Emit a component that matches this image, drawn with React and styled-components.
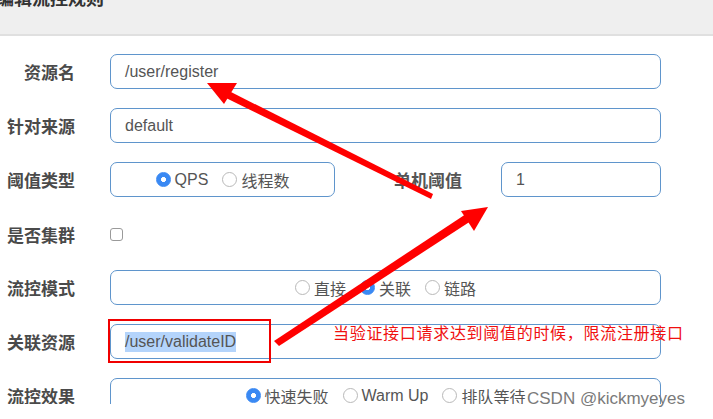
import React from "react";
import styled, { createGlobalStyle } from "styled-components";

const GlobalStyle = createGlobalStyle`
  html, body {
    margin: 0;
    padding: 0;
    background: #fff;
  }
  body {
    font-family: "Liberation Sans", "Noto Sans CJK SC", sans-serif;
  }
`;

const rows = [
  { label: "资源名", value: "/user/register" },
  { label: "针对来源", value: "default" },
];

function Radio({ checked, children }) {
  return (
    <RadioItem>
      <RadioDot checked={checked} />
      {children}
    </RadioItem>
  );
}

function App() {
  return (
    <>
      <GlobalStyle />
      <Page>
        <Shot>
          <Header>
            <Title>编辑流控规则</Title>
          </Header>
          <Form>
            {rows.map((r) => (
              <Row key={r.label}>
                <Label>{r.label}</Label>
                <Input>{r.value}</Input>
              </Row>
            ))}
            <Row>
              <Label>阈值类型</Label>
              <Split>
                <RadioBox>
                  <Radio checked>QPS</Radio>
                  <Radio>线程数</Radio>
                </RadioBox>
                <InlineLabel>单机阈值</InlineLabel>
                <Input>1</Input>
              </Split>
            </Row>
            <Row short>
              <Label>是否集群</Label>
              <Check />
            </Row>
            <Row>
              <Label>流控模式</Label>
              <RadioBox>
                <Radio>直接</Radio>
                <Radio checked>关联</Radio>
                <Radio>链路</Radio>
              </RadioBox>
            </Row>
            <Row>
              <Label>关联资源</Label>
              <Input>
                <Selected>/user/validateID</Selected>
              </Input>
            </Row>
            <Row>
              <Label>流控效果</Label>
              <RadioBox>
                <Radio checked>快速失败</Radio>
                <Radio>Warm Up</Radio>
                <Radio>排队等待</Radio>
              </RadioBox>
            </Row>
          </Form>
        </Shot>

        <Mark />
        <Note>当验证接口请求达到阈值的时候，限流注册接口</Note>
        <Arrows viewBox="0 0 713 419" width="713" height="419">
          <polygon points="433,194 431,199 226,98 229,91" fill="#ff0000" />
          <polygon points="207,83 237,83 224,104" fill="#ff0000" />
          <polygon points="274,341 279,346 474,219 469,212" fill="#ff0000" />
          <polygon points="488,207 461,211 474,231" fill="#ff0000" />
        </Arrows>
        <Watermark>CSDN @kickmyeyes</Watermark>
      </Page>
    </>
  );
}

export default App;

const Page = styled.div`
  position: relative;
  width: 713px;
  height: 419px;
  overflow: hidden;
  background: #fff;
`;

const Shot = styled.div`
  height: 404px;
  overflow: hidden;
`;

const Header = styled.div`
  height: 34px;
  background: #efefef;
  border-bottom: 2px solid #e0e0e0;
  overflow: hidden;
`;

const Title = styled.div`
  margin-top: -16px;
  margin-left: -4px;
  font-size: 18px;
  font-weight: bold;
  color: #333;
`;

const Form = styled.div`
  display: flex;
  flex-direction: column;
  gap: 19px;
  padding: 18px 52px 0 0;
`;

const Row = styled.div`
  display: grid;
  grid-template-columns: 110px 1fr;
  align-items: center;
  height: ${(p) => (p.short ? "33px" : "35px")};
  ${(p) => p.short && "margin-top: 2px;"}
`;

const Label = styled.div`
  padding-right: 35px;
  text-align: right;
  font-size: 17px;
  font-weight: bold;
  color: #4a4a4a;
  white-space: nowrap;
`;

const Input = styled.div`
  box-sizing: border-box;
  height: 35px;
  display: flex;
  align-items: center;
  padding: 0 14px;
  border: 1px solid #5f95cc;
  border-radius: 7px;
  font-size: 16px;
  color: #555;
`;

const Split = styled.div`
  display: grid;
  grid-template-columns: 225px 1fr 160px;
  align-items: center;
`;

const InlineLabel = styled.div`
  text-align: center;
  padding-left: 20px;
  font-size: 17px;
  font-weight: bold;
  color: #555;
`;

const RadioBox = styled.div`
  box-sizing: border-box;
  height: 35px;
  display: flex;
  align-items: center;
  justify-content: center;
  gap: 14px;
  border: 1px solid #5f95cc;
  border-radius: 7px;
  font-size: 16px;
  color: #555;
`;

const RadioItem = styled.label`
  display: flex;
  align-items: center;
  gap: 4px;
`;

const RadioDot = styled.span`
  box-sizing: border-box;
  width: 15px;
  height: 15px;
  border-radius: 50%;
  background: ${(p) =>
    p.checked
      ? "radial-gradient(circle, #fff 0 2.2px, #3a89f3 2.8px)"
      : "#fff"};
  border: 1px solid ${(p) => (p.checked ? "#3a89f3" : "#b9b9b9")};
`;

const Check = styled.span`
  box-sizing: border-box;
  width: 13px;
  height: 13px;
  border: 1px solid #9a9a9a;
  border-radius: 3px;
  background: #fff;
`;

const Selected = styled.span`
  background: #b4d4fb;
  padding: 1px 0;
`;

const Mark = styled.div`
  position: absolute;
  left: 108px;
  top: 319px;
  width: 163px;
  height: 44px;
  box-sizing: border-box;
  border: 2px solid #f00000;
`;

const Note = styled.div`
  position: absolute;
  left: 333px;
  top: 320px;
  font-size: 16px;
  letter-spacing: 0.7px;
  color: #f01010;
  white-space: nowrap;
`;

const Arrows = styled.svg`
  position: absolute;
  left: 0;
  top: 0;
  pointer-events: none;
`;

const Watermark = styled.div`
  position: absolute;
  left: 527px;
  top: 389px;
  font-size: 17px;
  color: #7a7a7a;
  white-space: nowrap;
`;
